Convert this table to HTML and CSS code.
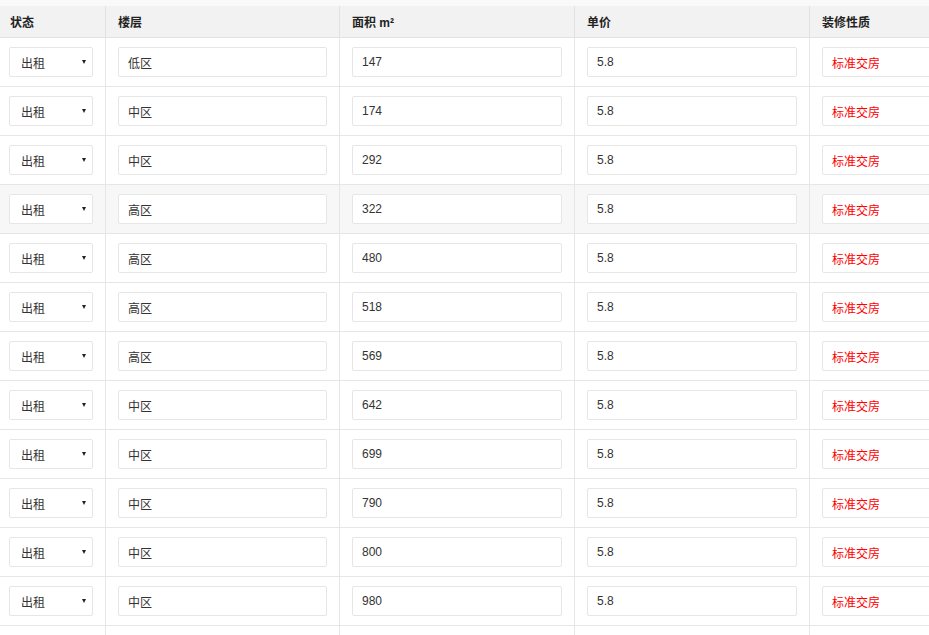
FILE: index.html
```html
<!DOCTYPE html>
<html lang="zh-CN">
<head>
<meta charset="utf-8">
<title>房源列表</title>
<link rel="stylesheet" href="styles.css">
</head>
<body>
<div class="strip"></div>
<table class="grid">
  <colgroup>
    <col class="c1"><col class="c2"><col class="c3"><col class="c4"><col class="c5">
  </colgroup>
  <thead>
    <tr><th>状态</th><th>楼层</th><th>面积 m²</th><th>单价</th><th>装修性质</th></tr>
  </thead>
  <tbody>
    <tr><td class="first"><div class="sel"><span>出租</span><i class="caret"></i></div></td><td><input class="field" value="低区"></td><td><input class="field" value="147"></td><td><input class="field" value="5.8"></td><td><input class="field red" value="标准交房"></td></tr>
    <tr><td class="first"><div class="sel"><span>出租</span><i class="caret"></i></div></td><td><input class="field" value="中区"></td><td><input class="field" value="174"></td><td><input class="field" value="5.8"></td><td><input class="field red" value="标准交房"></td></tr>
    <tr><td class="first"><div class="sel"><span>出租</span><i class="caret"></i></div></td><td><input class="field" value="中区"></td><td><input class="field" value="292"></td><td><input class="field" value="5.8"></td><td><input class="field red" value="标准交房"></td></tr>
    <tr class="hover"><td class="first"><div class="sel"><span>出租</span><i class="caret"></i></div></td><td><input class="field" value="高区"></td><td><input class="field" value="322"></td><td><input class="field" value="5.8"></td><td><input class="field red" value="标准交房"></td></tr>
    <tr><td class="first"><div class="sel"><span>出租</span><i class="caret"></i></div></td><td><input class="field" value="高区"></td><td><input class="field" value="480"></td><td><input class="field" value="5.8"></td><td><input class="field red" value="标准交房"></td></tr>
    <tr><td class="first"><div class="sel"><span>出租</span><i class="caret"></i></div></td><td><input class="field" value="高区"></td><td><input class="field" value="518"></td><td><input class="field" value="5.8"></td><td><input class="field red" value="标准交房"></td></tr>
    <tr><td class="first"><div class="sel"><span>出租</span><i class="caret"></i></div></td><td><input class="field" value="高区"></td><td><input class="field" value="569"></td><td><input class="field" value="5.8"></td><td><input class="field red" value="标准交房"></td></tr>
    <tr><td class="first"><div class="sel"><span>出租</span><i class="caret"></i></div></td><td><input class="field" value="中区"></td><td><input class="field" value="642"></td><td><input class="field" value="5.8"></td><td><input class="field red" value="标准交房"></td></tr>
    <tr><td class="first"><div class="sel"><span>出租</span><i class="caret"></i></div></td><td><input class="field" value="中区"></td><td><input class="field" value="699"></td><td><input class="field" value="5.8"></td><td><input class="field red" value="标准交房"></td></tr>
    <tr><td class="first"><div class="sel"><span>出租</span><i class="caret"></i></div></td><td><input class="field" value="中区"></td><td><input class="field" value="790"></td><td><input class="field" value="5.8"></td><td><input class="field red" value="标准交房"></td></tr>
    <tr><td class="first"><div class="sel"><span>出租</span><i class="caret"></i></div></td><td><input class="field" value="中区"></td><td><input class="field" value="800"></td><td><input class="field" value="5.8"></td><td><input class="field red" value="标准交房"></td></tr>
    <tr><td class="first"><div class="sel"><span>出租</span><i class="caret"></i></div></td><td><input class="field" value="中区"></td><td><input class="field" value="980"></td><td><input class="field" value="5.8"></td><td><input class="field red" value="标准交房"></td></tr>
    <tr><td class="first"><div class="sel"><span>出租</span><i class="caret"></i></div></td><td><input class="field" value="中区"></td><td><input class="field" value="1020"></td><td><input class="field" value="5.8"></td><td><input class="field red" value="标准交房"></td></tr>
  </tbody>
</table>
</body>
</html>
```

FILE: styles.css
```css
* { box-sizing: border-box; }
html, body {
  margin: 0;
  padding: 0;
  background: #fff;
  overflow: hidden;
  font-family: "Liberation Sans", "Noto Sans CJK SC", sans-serif;
  font-size: 12px;
  color: #333;
}
.strip {
  height: 6px;
  background: #f9f9f9;
}
.grid {
  border-collapse: separate;
  border-spacing: 0;
  table-layout: fixed;
  width: 1045px;
}
.c1 { width: 106px; }
.c2 { width: 234px; }
.c3 { width: 235px; }
.c4 { width: 235px; }
.c5 { width: 235px; }
.grid th {
  height: 32px;
  padding: 0 0 0 12px;
  text-align: left;
  font-weight: bold;
  color: #222;
  background: #f2f2f2;
  border-right: 1px solid #e2e2e2;
  border-bottom: 1px solid #e2e2e2;
}
.grid th:first-child { padding-left: 10px; }
.grid td {
  height: 49px;
  padding: 9px 12px;
  border-right: 1px solid #e6e6e6;
  border-bottom: 1px solid #e6e6e6;
  vertical-align: top;
}
.grid td.first { padding-left: 9px; padding-right: 13px; }
.grid tr.hover td { background: #f7f7f7; }
.sel {
  height: 30px;
  width: 84px;
  display: flex;
  align-items: center;
  justify-content: space-between;
  padding: 0 6px 0 11px;
  border: 1px solid #e6e6e6;
  border-radius: 2px;
  background: #fff;
  color: #333;
}
.caret {
  width: 0;
  height: 0;
  border-left: 2.5px solid transparent;
  border-right: 2.5px solid transparent;
  border-top: 4px solid #222;
}
.field {
  display: block;
  width: 100%;
  height: 30px;
  padding: 0 9px;
  border: 1px solid #e6e6e6;
  border-radius: 2px;
  background: #fff;
  font: inherit;
  color: #333;
  outline: none;
}
.field.red { color: #f00; }
```
